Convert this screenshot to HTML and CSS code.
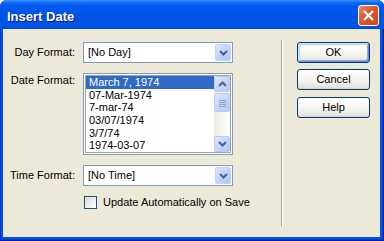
FILE: index.html
```html
<!DOCTYPE html>
<html lang="en">
<head>
    <meta charset="UTF-8">
    <title>Insert Date</title>
    <link rel="stylesheet" href="styles.css">
</head>
<body>
    <div class="window">
        <div class="titlebar">
            <span class="title">Insert Date</span>
            <div class="close">
                <svg width="19" height="19" viewBox="0 0 19 19"><path d="M5 5 L14 14 M14 5 L5 14" stroke="#fff" stroke-width="2.2" fill="none"/></svg>
            </div>
        </div>
        <div class="client">
            <div class="form">
                <label class="lbl">Day Format:</label>
                <div class="combo">
                    <span class="combo-text">[No Day]</span>
                    <div class="drop">
                        <svg width="9" height="6" viewBox="0 0 9 6"><path d="M1 1 L4.5 4.5 L8 1" stroke="#4d6185" stroke-width="2" fill="none"/></svg>
                    </div>
                </div>

                <label class="lbl lbl-top">Date Format:</label>
                <div class="listbox">
                    <div class="list-inner">
                        <ul class="items">
                            <li class="selected">March 7, 1974</li>
                            <li>07-Mar-1974</li>
                            <li>7-mar-74</li>
                            <li>03/07/1974</li>
                            <li>3/7/74</li>
                            <li>1974-03-07</li>
                        </ul>
                        <div class="scrollbar">
                            <div class="sb-btn">
                                <svg width="9" height="6" viewBox="0 0 9 6"><path d="M1 5 L4.5 1.5 L8 5" stroke="#4d6185" stroke-width="2" fill="none"/></svg>
                            </div>
                            <div class="sb-thumb">
                                <svg width="7" height="8" viewBox="0 0 7 8"><path d="M0 1.5 H7 M0 3.5 H7 M0 5.5 H7 M0 7.5 H7" stroke="#8aa0d8" stroke-width="1"/></svg>
                            </div>
                            <div class="sb-track"></div>
                            <div class="sb-btn">
                                <svg width="9" height="6" viewBox="0 0 9 6"><path d="M1 1 L4.5 4.5 L8 1" stroke="#4d6185" stroke-width="2" fill="none"/></svg>
                            </div>
                        </div>
                    </div>
                </div>

                <label class="lbl">Time Format:</label>
                <div class="combo">
                    <span class="combo-text">[No Time]</span>
                    <div class="drop">
                        <svg width="9" height="6" viewBox="0 0 9 6"><path d="M1 1 L4.5 4.5 L8 1" stroke="#4d6185" stroke-width="2" fill="none"/></svg>
                    </div>
                </div>

                <div></div>
                <div class="check-row">
                    <span class="checkbox"></span>
                    <span>Update Automatically on Save</span>
                </div>
            </div>

            <div class="separator"></div>

            <div class="buttons">
                <div class="btn btn-default">OK</div>
                <div class="btn">Cancel</div>
                <div class="btn btn-last">Help</div>
            </div>
        </div>
    </div>
</body>
</html>
```

FILE: styles.css
```css
body {
    margin: 0;
    background: #fff;
    font-family: "Liberation Sans", Arial, sans-serif;
    font-size: 11px;
    color: #000;
}
.window {
    width: 384px;
    height: 241px;
    display: flex;
    flex-direction: column;
    background: #0055e5;
    border-radius: 7px 7px 0 0;
    overflow: hidden;
    box-shadow: inset 1px 0 #0831d9, inset -1px 0 #001ea0, inset 0 -1px #001ea0, inset -2px 0 #0040cc, inset 0 -2px #0040cc;
}
.titlebar {
    height: 29px;
    box-sizing: border-box;
    display: flex;
    align-items: flex-start;
    padding: 5px 5px 0 7px;
    background: linear-gradient(to bottom, #3d95ff 0px, #0a66f5 3px, #0058ee 6px, #0055e8 14px, #0054e3 22px, #0058e8 26px, #0046d8 29px);
}
.title {
    color: #fff;
    font-weight: bold;
    font-size: 13px;
    line-height: 16px;
    margin-top: 4px;
    text-shadow: 1px 1px #0f1089;
}
.close {
    margin-left: auto;
    width: 21px;
    height: 21px;
    box-sizing: border-box;
    border: 1px solid #fff;
    border-radius: 3px;
    background: linear-gradient(135deg, #eb8c6c 0%, #dd5a33 40%, #cc4418 100%);
    display: flex;
    align-items: center;
    justify-content: center;
}
.client {
    flex: 1;
    margin: 0 4px 4px 3px;
    background: #ece9d8;
    display: flex;
    align-items: flex-start;
}
.form {
    display: grid;
    grid-template-columns: 72px 150px;
    column-gap: 8px;
    row-gap: 10px;
    padding-top: 13px;
}
.lbl {
    text-align: right;
    line-height: 13px;
    align-self: center;
}
.lbl-top {
    align-self: start;
    padding-top: 1px;
}
.combo {
    height: 21px;
    box-sizing: border-box;
    border: 1px solid #7f9db9;
    background: #fff;
    display: flex;
    align-items: center;
}
.combo-text {
    flex: 1;
    padding-left: 4px;
    line-height: 13px;
}
.drop {
    width: 16px;
    height: 17px;
    margin: 1px;
    box-sizing: border-box;
    border: 1px solid #c3d3fd;
    border-radius: 2px;
    background: linear-gradient(135deg, #dce6fe 0%, #c1d3fb 50%, #b1c6f7 100%);
    display: flex;
    align-items: center;
    justify-content: center;
}
.listbox {
    height: 82px;
    box-sizing: border-box;
    border: 1px solid #7f9db9;
    padding: 1px;
    background: #fff;
}
.list-inner {
    height: 100%;
    box-sizing: border-box;
    border: 1px solid #9aa4b4;
    display: flex;
}
.items {
    list-style: none;
    margin: 0;
    padding: 0;
    flex: 1;
    overflow: hidden;
}
.items li {
    height: 12.7px;
    line-height: 13px;
    padding-left: 3px;
    white-space: nowrap;
}
.items li.selected {
    background: #316ac5;
    color: #fff;
}
.scrollbar {
    width: 16px;
    display: flex;
    flex-direction: column;
    background: linear-gradient(to right, #eeede5, #fdfdfa);
}
.sb-btn, .sb-thumb {
    box-sizing: border-box;
    border: 1px solid #b9c9ef;
    border-radius: 2px;
    background: linear-gradient(135deg, #e1eafe 0%, #c6d6fc 50%, #b4c8f6 100%);
    display: flex;
    align-items: center;
    justify-content: center;
}
.sb-btn {
    height: 16px;
}
.sb-thumb {
    height: 19px;
    margin-top: 1px;
}
.sb-track {
    flex: 1;
}
.check-row {
    display: flex;
    align-items: center;
    line-height: 13px;
    white-space: nowrap;
}
.checkbox {
    flex-shrink: 0;
    width: 13px;
    height: 13px;
    box-sizing: border-box;
    border: 1px solid #1c5180;
    background: linear-gradient(135deg, #dcdcd7, #fff);
    margin-left: 1px;
    margin-right: 6px;
}
.separator {
    width: 1px;
    height: 186px;
    margin: 11px 14px 0 48px;
    background: #aca899;
    border-right: 1px solid #fff;
}
.buttons {
    display: flex;
    flex-direction: column;
    gap: 6px;
    padding-top: 13px;
}
.btn {
    width: 73px;
    height: 21px;
    box-sizing: border-box;
    border: 1px solid #003c74;
    border-radius: 3px;
    background: linear-gradient(to bottom, #fff 0%, #f4f3ee 60%, #e6e3d9 90%, #d6d0c5 100%);
    display: flex;
    align-items: center;
    justify-content: center;
    line-height: 13px;
}
.btn-default {
    box-shadow: inset 1px 1px #cee7ff, inset -1px -1px #6982ee, inset 2px 2px #bcd4f6, inset -2px -2px #89ade4;
}
.btn-last {
    margin-top: 1px;
}
```
